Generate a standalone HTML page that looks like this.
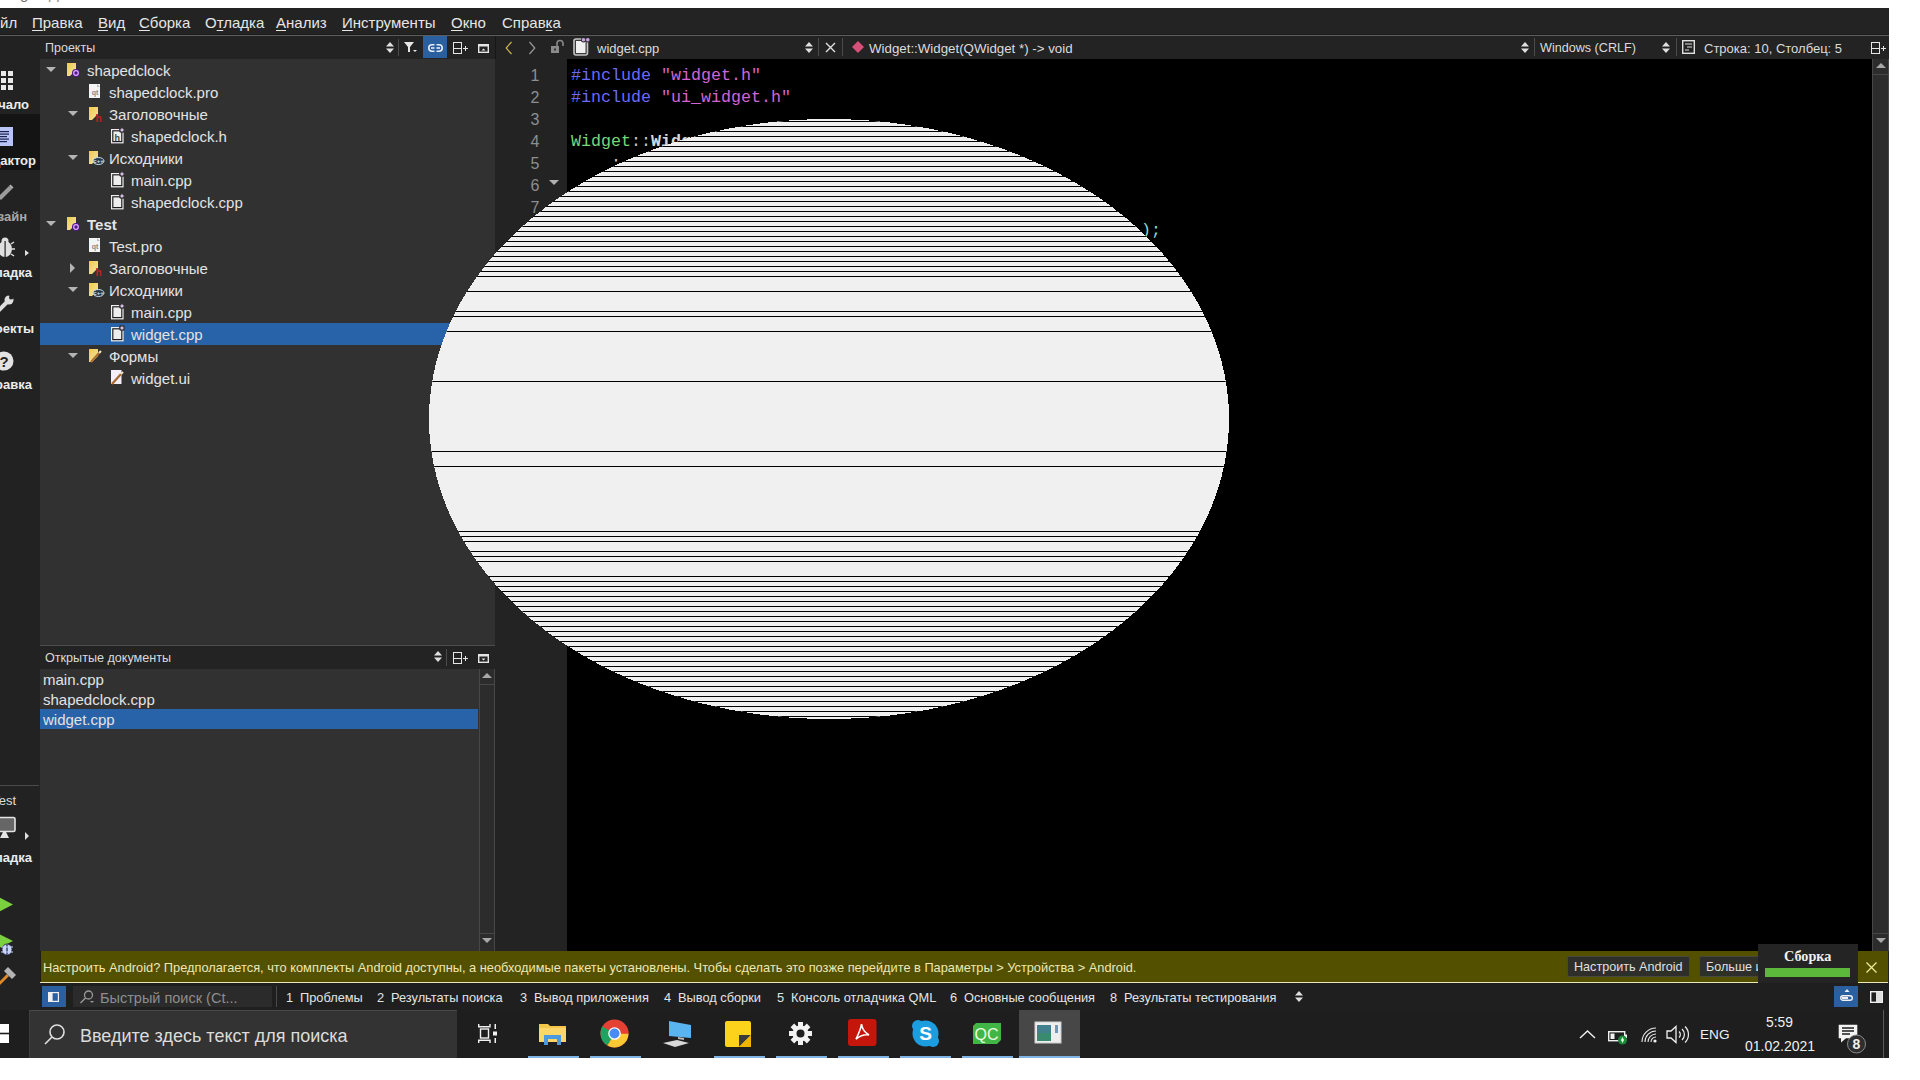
<!DOCTYPE html><html><head><meta charset="utf-8"><style>
html,body{margin:0;padding:0;width:1920px;height:1080px;overflow:hidden;background:#fff;}
body>div,body>svg{position:absolute;}
.t{position:absolute;white-space:pre;line-height:1;}
u{text-decoration:underline;text-underline-offset:2px;}
</style></head><body>
<div class="t" style="left:20px;top:-14px;font-size:15px;color:#707070;font-family:'Liberation Sans', sans-serif;">g</div>
<div class="t" style="left:48px;top:-14px;font-size:15px;color:#909090;font-family:'Liberation Sans', sans-serif;">pp</div>
<div style="left:0px;top:8px;width:1889px;height:1050px;background:#232323;"></div>
<div style="left:0px;top:8px;width:1889px;height:27px;background:#232323;"></div>
<div style="left:0px;top:34px;width:1889px;height:1px;background:#1c1c1c;"></div>
<div style="left:0px;top:35px;width:1889px;height:1px;background:#5c5c5c;"></div>
<div class="t" style="left:0px;top:15px;font-size:15px;color:#e6e6e6;font-family:'Liberation Sans', sans-serif;">йл</div>
<div class="t" style="left:32px;top:15px;font-size:15px;color:#e6e6e6;font-family:'Liberation Sans', sans-serif;"><u>П</u>равка</div>
<div class="t" style="left:98px;top:15px;font-size:15px;color:#e6e6e6;font-family:'Liberation Sans', sans-serif;"><u>В</u>ид</div>
<div class="t" style="left:139px;top:15px;font-size:15px;color:#e6e6e6;font-family:'Liberation Sans', sans-serif;"><u>С</u>борка</div>
<div class="t" style="left:205px;top:15px;font-size:15px;color:#e6e6e6;font-family:'Liberation Sans', sans-serif;">О<u>т</u>ладка</div>
<div class="t" style="left:276px;top:15px;font-size:15px;color:#e6e6e6;font-family:'Liberation Sans', sans-serif;"><u>А</u>нализ</div>
<div class="t" style="left:342px;top:15px;font-size:15px;color:#e6e6e6;font-family:'Liberation Sans', sans-serif;"><u>И</u>нструменты</div>
<div class="t" style="left:451px;top:15px;font-size:15px;color:#e6e6e6;font-family:'Liberation Sans', sans-serif;"><u>О</u>кно</div>
<div class="t" style="left:502px;top:15px;font-size:15px;color:#e6e6e6;font-family:'Liberation Sans', sans-serif;">Справ<u>к</u>а</div>
<div style="left:0px;top:36px;width:40px;height:974px;background:#222222;"></div>
<div style="left:0px;top:114px;width:40px;height:56px;background:#141414;"></div>
<svg style="position:absolute;left:0px;top:71px;overflow:visible;" width="14" height="19" viewBox="0 0 14 19"><rect x="-6" y="0" width="5" height="5" fill="#e8e8e8"/><rect x="-6" y="7" width="5" height="5" fill="#e8e8e8"/><rect x="-6" y="14" width="5" height="5" fill="#e8e8e8"/><rect x="1" y="0" width="5" height="5" fill="#e8e8e8"/><rect x="1" y="7" width="5" height="5" fill="#e8e8e8"/><rect x="1" y="14" width="5" height="5" fill="#e8e8e8"/><rect x="8" y="0" width="5" height="5" fill="#e8e8e8"/><rect x="8" y="7" width="5" height="5" fill="#e8e8e8"/><rect x="8" y="14" width="5" height="5" fill="#e8e8e8"/></svg>
<div class="t" style="right:1891px;top:98px;font-size:13px;color:#ececec;font-family:'Liberation Sans', sans-serif;text-align:right;font-weight:bold;">Начало</div>
<svg style="position:absolute;left:0px;top:127px;overflow:visible;" width="14" height="20" viewBox="0 0 14 20"><rect x="-6" y="0" width="19" height="19" fill="#b8c4f4"/><g fill="#1a2050"><rect x="-4" y="4" width="13" height="1.2"/><rect x="-4" y="6.5" width="13" height="1.2"/><rect x="-4" y="9" width="11" height="1.2"/><rect x="-4" y="11.5" width="13" height="1.2"/><rect x="-4" y="14" width="11" height="1.2"/></g></svg>
<div class="t" style="right:1884px;top:154px;font-size:13px;color:#ececec;font-family:'Liberation Sans', sans-serif;text-align:right;font-weight:bold;">Редактор</div>
<svg style="position:absolute;left:0px;top:183px;overflow:visible;" width="14" height="17" viewBox="0 0 14 17"><path d="M-2,14 L9,3 L12,6 L1,17 Z" fill="#9c9c9c"/><path d="M9,3 L10.5,1.5 L13.5,4.5 L12,6 Z" fill="#b0b0b0"/></svg>
<div class="t" style="right:1893px;top:210px;font-size:13px;color:#a8a8a8;font-family:'Liberation Sans', sans-serif;text-align:right;font-weight:bold;">Дизайн</div>
<svg style="position:absolute;left:0px;top:238px;overflow:visible;" width="30" height="20" viewBox="0 0 30 20"><ellipse cx="5" cy="11" rx="7" ry="8" fill="#dedede"/><circle cx="5" cy="3" r="3.5" fill="#dedede"/><rect x="4.5" y="3" width="1.2" height="16" fill="#222"/><path d="M11,6 L14,4 M12,11 L15,11 M11,16 L14,18" stroke="#dedede" stroke-width="1.5"/><path d="M25,12 L29,15 L25,18 Z" fill="#e0e0e0"/></svg>
<div class="t" style="right:1888px;top:266px;font-size:13px;color:#ececec;font-family:'Liberation Sans', sans-serif;text-align:right;font-weight:bold;">Отладка</div>
<svg style="position:absolute;left:0px;top:295px;overflow:visible;" width="14" height="17" viewBox="0 0 14 17"><path d="M-1,15 L6,8" stroke="#dedede" stroke-width="4" stroke-linecap="round"/><circle cx="9" cy="5" r="4.5" fill="#dedede"/><path d="M8.5,0 L13,0 L13,4.5 Z" fill="#222"/><circle cx="11" cy="2.5" r="2" fill="#222"/></svg>
<div class="t" style="right:1886px;top:322px;font-size:13px;color:#ececec;font-family:'Liberation Sans', sans-serif;text-align:right;font-weight:bold;">Проекты</div>
<svg style="position:absolute;left:0px;top:351px;overflow:visible;" width="14" height="20" viewBox="0 0 14 20"><circle cx="4" cy="10" r="9.5" fill="#e2e2e2"/><text x="4" y="15.5" font-family="Liberation Sans" font-weight="bold" font-size="15" text-anchor="middle" fill="#222">?</text></svg>
<div class="t" style="right:1888px;top:378px;font-size:13px;color:#ececec;font-family:'Liberation Sans', sans-serif;text-align:right;font-weight:bold;">Справка</div>
<div style="left:0px;top:785px;width:39px;height:1px;background:#4a4a4a;"></div>
<div class="t" style="right:1904px;top:794px;font-size:13px;color:#dcdcdc;font-family:'Liberation Sans', sans-serif;text-align:right;">Test</div>
<svg style="position:absolute;left:0px;top:817px;overflow:visible;" width="30" height="25" viewBox="0 0 30 25"><rect x="-4" y="0.5" width="19" height="14" rx="1.5" fill="#666" stroke="#e4e4e4" stroke-width="1.6"/><path d="M3,15 L6,15 L9,21 L0,21 Z" fill="#e4e4e4"/><path d="M25,832 L29,836 L25,840 Z" transform="translate(0,-817)" fill="#e0e0e0"/></svg>
<div class="t" style="right:1888px;top:851px;font-size:13px;color:#ececec;font-family:'Liberation Sans', sans-serif;text-align:right;font-weight:bold;">Отладка</div>
<svg style="position:absolute;left:0px;top:896px;overflow:visible;" width="14" height="18" viewBox="0 0 14 18"><path d="M-5,-1 L13,8.5 L-5,18 Z" fill="#7bd03f"/></svg>
<svg style="position:absolute;left:0px;top:933px;overflow:visible;" width="16" height="24" viewBox="0 0 16 24"><path d="M-5,-1 L13,8 L-5,17 Z" fill="#7bd03f"/><ellipse cx="7" cy="16.5" rx="5" ry="5.5" fill="#c8d4f8" stroke="#1a1a40" stroke-width="0.8"/><rect x="6.4" y="11.5" width="1.2" height="10" fill="#1a2050"/><path d="M1,14 L13,14 M1,19 L13,19" stroke="#c8d4f8" stroke-width="1"/></svg>
<svg style="position:absolute;left:0px;top:968px;overflow:visible;" width="16" height="20" viewBox="0 0 16 20"><path d="M-2,17 L8,7" stroke="#e08a2a" stroke-width="3"/><path d="M4,3 L8,-1 L16,7 L12,11 Z" fill="#b4b4b4"/></svg>
<div style="left:40px;top:36px;width:455px;height:23px;background:#232323;"></div>
<div class="t" style="left:45px;top:42px;font-size:12.5px;color:#dadada;font-family:'Liberation Sans', sans-serif;">Проекты</div>
<svg style="position:absolute;left:386px;top:42px;overflow:visible;" width="8" height="11" viewBox="0 0 8 11"><path d="M0,4.5 L4,0 L8,4.5 Z M0,6.5 L4,11 L8,6.5 Z" fill="#e0e0e0"/></svg>
<div style="left:398px;top:39px;width:1px;height:17px;background:#4a4a4a;"></div>
<svg style="position:absolute;left:404px;top:42px;overflow:visible;" width="14" height="11" viewBox="0 0 14 11"><path d="M0,0 L10,0 L6,5 L6,10 L4,10 L4,5 Z" fill="#e6e6e6"/><path d="M9,8 L13,8 L11,10 Z" fill="#e6e6e6"/></svg>
<div style="left:423px;top:36px;width:24px;height:22px;background:#2a5fa0;"></div>
<svg style="position:absolute;left:428px;top:44px;overflow:visible;" width="15" height="8" viewBox="0 0 15 8"><rect x="0.8" y="0.8" width="13.4" height="6.4" rx="3.2" fill="none" stroke="#e6eef8" stroke-width="1.6"/><rect x="3" y="3.2" width="9" height="1.6" fill="#e6eef8"/><rect x="6.5" y="0" width="2" height="8" fill="#2a5fa0"/></svg>
<svg style="position:absolute;left:453px;top:42px;overflow:visible;shape-rendering:crispEdges;" width="16" height="12" viewBox="0 0 16 12"><rect x="0.5" y="0.5" width="8" height="11" fill="none" stroke="#e6e6e6" stroke-width="1.1"/><rect x="1" y="5.5" width="7" height="1" fill="#e6e6e6"/><rect x="10" y="5.5" width="5" height="1" fill="#e6e6e6"/><rect x="12" y="3.5" width="1" height="5" fill="#e6e6e6"/></svg>
<svg style="position:absolute;left:478px;top:44px;overflow:visible;" width="11" height="9" viewBox="0 0 11 9"><rect x="0.7" y="0.7" width="9.6" height="7.6" fill="none" stroke="#e6e6e6" stroke-width="1.4"/><rect x="1" y="1" width="9" height="1.5" fill="#e6e6e6"/><path d="M3.5,6.5 L7.5,6.5 L5.5,4.5 Z" fill="#e6e6e6"/></svg>
<div style="left:40px;top:59px;width:455px;height:586px;background:#313131;"></div>
<div style="left:40px;top:645px;width:455px;height:1px;background:#4c4c4c;"></div>
<svg style="position:absolute;left:46px;top:67px;overflow:visible;" width="10" height="6" viewBox="0 0 10 6"><path d="M0,0 L10,0 L5,5 Z" fill="#b4b4b4"/></svg>
<svg style="position:absolute;left:67px;top:63px;overflow:visible;" width="14" height="15" viewBox="0 0 14 15"><defs><linearGradient id="fg" x1="0" y1="0" x2="1" y2="1"><stop offset="0" stop-color="#f2c94c"/><stop offset="1" stop-color="#f4e6a8"/></linearGradient></defs><path d="M0,0 L9,0 L9,7 L3,13 L0,13 Z" fill="url(#fg)"/><circle cx="9" cy="10" r="4" fill="#4a1a8a"/><circle cx="9" cy="10" r="2.3" fill="none" stroke="#e6a8ff" stroke-width="1.2"/></svg>
<div class="t" style="left:87px;top:63px;font-size:15px;color:#e3e3e3;font-family:'Liberation Sans', sans-serif;">shapedclock</div>
<svg style="position:absolute;left:89px;top:84px;overflow:visible;" width="13" height="16" viewBox="0 0 13 16"><rect x="0" y="0" width="11" height="14" fill="#f4f4f4"/><path d="M8,0 L11,3 L8,3 Z" fill="#bbb"/><text x="6" y="10.5" font-family="Liberation Sans" font-size="7" font-weight="bold" fill="#8a8a8a" text-anchor="middle">qt</text></svg>
<div class="t" style="left:109px;top:85px;font-size:15px;color:#e3e3e3;font-family:'Liberation Sans', sans-serif;">shapedclock.pro</div>
<svg style="position:absolute;left:68px;top:111px;overflow:visible;" width="10" height="6" viewBox="0 0 10 6"><path d="M0,0 L10,0 L5,5 Z" fill="#b4b4b4"/></svg>
<svg style="position:absolute;left:89px;top:107px;overflow:visible;" width="14" height="15" viewBox="0 0 14 15"><defs><linearGradient id="fg" x1="0" y1="0" x2="1" y2="1"><stop offset="0" stop-color="#f2c94c"/><stop offset="1" stop-color="#f4e6a8"/></linearGradient></defs><path d="M0,0 L9,0 L9,7 L3,13 L0,13 Z" fill="url(#fg)"/><text x="9.5" y="14.5" font-family="Liberation Sans" font-size="10" font-weight="bold" fill="#c02020" text-anchor="middle">h</text></svg>
<div class="t" style="left:109px;top:107px;font-size:15px;color:#e3e3e3;font-family:'Liberation Sans', sans-serif;">Заголовочные</div>
<svg style="position:absolute;left:111px;top:128px;overflow:visible;" width="13" height="16" viewBox="0 0 13 16"><rect x="0.6" y="1.6" width="11.4" height="13.2" fill="#1e1e1e" stroke="#f0f0f0" stroke-width="1.2"/><rect x="2.4" y="3.4" width="7.8" height="9.6" fill="#eeeeee"/><circle cx="11" cy="2" r="3" fill="#313131"/><path d="M11,-0.5 L11.8,1.2 L13.5,2 L11.8,2.8 L11,4.5 L10.2,2.8 L8.5,2 L10.2,1.2 Z" fill="#e0c8f0"/><text x="6.2" y="12.5" font-family="Liberation Sans" font-size="9" font-weight="bold" fill="#444" text-anchor="middle">h</text></svg>
<div class="t" style="left:131px;top:129px;font-size:15px;color:#e3e3e3;font-family:'Liberation Sans', sans-serif;">shapedclock.h</div>
<svg style="position:absolute;left:68px;top:155px;overflow:visible;" width="10" height="6" viewBox="0 0 10 6"><path d="M0,0 L10,0 L5,5 Z" fill="#b4b4b4"/></svg>
<svg style="position:absolute;left:89px;top:151px;overflow:visible;" width="14" height="15" viewBox="0 0 14 15"><defs><linearGradient id="fg" x1="0" y1="0" x2="1" y2="1"><stop offset="0" stop-color="#f2c94c"/><stop offset="1" stop-color="#f4e6a8"/></linearGradient></defs><path d="M0,0 L9,0 L9,7 L3,13 L0,13 Z" fill="url(#fg)"/><ellipse cx="9.5" cy="10" rx="5.5" ry="3.5" fill="#2a3a4a" stroke="#c8e0f0" stroke-width="1"/><text x="9.5" y="12.3" font-family="Liberation Sans" font-size="6" font-weight="bold" fill="#c8e0f0" text-anchor="middle">c++</text></svg>
<div class="t" style="left:109px;top:151px;font-size:15px;color:#e3e3e3;font-family:'Liberation Sans', sans-serif;">Исходники</div>
<svg style="position:absolute;left:111px;top:172px;overflow:visible;" width="13" height="16" viewBox="0 0 13 16"><rect x="0.6" y="1.6" width="11.4" height="13.2" fill="#1e1e1e" stroke="#f0f0f0" stroke-width="1.2"/><rect x="2.4" y="3.4" width="7.8" height="9.6" fill="#eeeeee"/><circle cx="11" cy="2" r="3" fill="#313131"/><path d="M11,-0.5 L11.8,1.2 L13.5,2 L11.8,2.8 L11,4.5 L10.2,2.8 L8.5,2 L10.2,1.2 Z" fill="#e0c8f0"/></svg>
<div class="t" style="left:131px;top:173px;font-size:15px;color:#e3e3e3;font-family:'Liberation Sans', sans-serif;">main.cpp</div>
<svg style="position:absolute;left:111px;top:194px;overflow:visible;" width="13" height="16" viewBox="0 0 13 16"><rect x="0.6" y="1.6" width="11.4" height="13.2" fill="#1e1e1e" stroke="#f0f0f0" stroke-width="1.2"/><rect x="2.4" y="3.4" width="7.8" height="9.6" fill="#eeeeee"/><circle cx="11" cy="2" r="3" fill="#313131"/><path d="M11,-0.5 L11.8,1.2 L13.5,2 L11.8,2.8 L11,4.5 L10.2,2.8 L8.5,2 L10.2,1.2 Z" fill="#e0c8f0"/></svg>
<div class="t" style="left:131px;top:195px;font-size:15px;color:#e3e3e3;font-family:'Liberation Sans', sans-serif;">shapedclock.cpp</div>
<svg style="position:absolute;left:46px;top:221px;overflow:visible;" width="10" height="6" viewBox="0 0 10 6"><path d="M0,0 L10,0 L5,5 Z" fill="#b4b4b4"/></svg>
<svg style="position:absolute;left:67px;top:217px;overflow:visible;" width="14" height="15" viewBox="0 0 14 15"><defs><linearGradient id="fg" x1="0" y1="0" x2="1" y2="1"><stop offset="0" stop-color="#f2c94c"/><stop offset="1" stop-color="#f4e6a8"/></linearGradient></defs><path d="M0,0 L9,0 L9,7 L3,13 L0,13 Z" fill="url(#fg)"/><circle cx="9" cy="10" r="4" fill="#4a1a8a"/><circle cx="9" cy="10" r="2.3" fill="none" stroke="#e6a8ff" stroke-width="1.2"/></svg>
<div class="t" style="left:87px;top:217px;font-size:15px;color:#e3e3e3;font-family:'Liberation Sans', sans-serif;font-weight:bold;">Test</div>
<svg style="position:absolute;left:89px;top:238px;overflow:visible;" width="13" height="16" viewBox="0 0 13 16"><rect x="0" y="0" width="11" height="14" fill="#f4f4f4"/><path d="M8,0 L11,3 L8,3 Z" fill="#bbb"/><text x="6" y="10.5" font-family="Liberation Sans" font-size="7" font-weight="bold" fill="#8a8a8a" text-anchor="middle">qt</text></svg>
<div class="t" style="left:109px;top:239px;font-size:15px;color:#e3e3e3;font-family:'Liberation Sans', sans-serif;">Test.pro</div>
<svg style="position:absolute;left:70px;top:263px;overflow:visible;" width="6" height="10" viewBox="0 0 6 10"><path d="M0,0 L5,5 L0,10 Z" fill="#b4b4b4"/></svg>
<svg style="position:absolute;left:89px;top:261px;overflow:visible;" width="14" height="15" viewBox="0 0 14 15"><defs><linearGradient id="fg" x1="0" y1="0" x2="1" y2="1"><stop offset="0" stop-color="#f2c94c"/><stop offset="1" stop-color="#f4e6a8"/></linearGradient></defs><path d="M0,0 L9,0 L9,7 L3,13 L0,13 Z" fill="url(#fg)"/><text x="9.5" y="14.5" font-family="Liberation Sans" font-size="10" font-weight="bold" fill="#c02020" text-anchor="middle">h</text></svg>
<div class="t" style="left:109px;top:261px;font-size:15px;color:#e3e3e3;font-family:'Liberation Sans', sans-serif;">Заголовочные</div>
<svg style="position:absolute;left:68px;top:287px;overflow:visible;" width="10" height="6" viewBox="0 0 10 6"><path d="M0,0 L10,0 L5,5 Z" fill="#b4b4b4"/></svg>
<svg style="position:absolute;left:89px;top:283px;overflow:visible;" width="14" height="15" viewBox="0 0 14 15"><defs><linearGradient id="fg" x1="0" y1="0" x2="1" y2="1"><stop offset="0" stop-color="#f2c94c"/><stop offset="1" stop-color="#f4e6a8"/></linearGradient></defs><path d="M0,0 L9,0 L9,7 L3,13 L0,13 Z" fill="url(#fg)"/><ellipse cx="9.5" cy="10" rx="5.5" ry="3.5" fill="#2a3a4a" stroke="#c8e0f0" stroke-width="1"/><text x="9.5" y="12.3" font-family="Liberation Sans" font-size="6" font-weight="bold" fill="#c8e0f0" text-anchor="middle">c++</text></svg>
<div class="t" style="left:109px;top:283px;font-size:15px;color:#e3e3e3;font-family:'Liberation Sans', sans-serif;">Исходники</div>
<svg style="position:absolute;left:111px;top:304px;overflow:visible;" width="13" height="16" viewBox="0 0 13 16"><rect x="0.6" y="1.6" width="11.4" height="13.2" fill="#1e1e1e" stroke="#f0f0f0" stroke-width="1.2"/><rect x="2.4" y="3.4" width="7.8" height="9.6" fill="#eeeeee"/><circle cx="11" cy="2" r="3" fill="#313131"/><path d="M11,-0.5 L11.8,1.2 L13.5,2 L11.8,2.8 L11,4.5 L10.2,2.8 L8.5,2 L10.2,1.2 Z" fill="#e0c8f0"/></svg>
<div class="t" style="left:131px;top:305px;font-size:15px;color:#e3e3e3;font-family:'Liberation Sans', sans-serif;">main.cpp</div>
<div style="left:40px;top:323px;width:455px;height:22px;background:#2862a8;"></div>
<svg style="position:absolute;left:111px;top:326px;overflow:visible;" width="13" height="16" viewBox="0 0 13 16"><rect x="0.6" y="1.6" width="11.4" height="13.2" fill="#1e1e1e" stroke="#f0f0f0" stroke-width="1.2"/><rect x="2.4" y="3.4" width="7.8" height="9.6" fill="#eeeeee"/><circle cx="11" cy="2" r="3" fill="#313131"/><path d="M11,-0.5 L11.8,1.2 L13.5,2 L11.8,2.8 L11,4.5 L10.2,2.8 L8.5,2 L10.2,1.2 Z" fill="#e0c8f0"/></svg>
<div class="t" style="left:131px;top:327px;font-size:15px;color:#e3e3e3;font-family:'Liberation Sans', sans-serif;">widget.cpp</div>
<svg style="position:absolute;left:68px;top:353px;overflow:visible;" width="10" height="6" viewBox="0 0 10 6"><path d="M0,0 L10,0 L5,5 Z" fill="#b4b4b4"/></svg>
<svg style="position:absolute;left:89px;top:349px;overflow:visible;" width="14" height="15" viewBox="0 0 14 15"><defs><linearGradient id="fg" x1="0" y1="0" x2="1" y2="1"><stop offset="0" stop-color="#f2c94c"/><stop offset="1" stop-color="#f4e6a8"/></linearGradient></defs><path d="M0,0 L9,0 L9,7 L3,13 L0,13 Z" fill="url(#fg)"/><path d="M2,13 L10,4" stroke="#b07030" stroke-width="2.2"/><path d="M10,4 L12,2" stroke="#f0e0c0" stroke-width="2.2"/></svg>
<div class="t" style="left:109px;top:349px;font-size:15px;color:#e3e3e3;font-family:'Liberation Sans', sans-serif;">Формы</div>
<svg style="position:absolute;left:111px;top:370px;overflow:visible;" width="13" height="16" viewBox="0 0 13 16"><rect x="0" y="0" width="10.5" height="14" fill="#f4eef8"/><path d="M1,14 L10,4" stroke="#a86830" stroke-width="2.2"/><path d="M10,4 L12,2" stroke="#f0e0c0" stroke-width="2.2"/></svg>
<div class="t" style="left:131px;top:371px;font-size:15px;color:#e3e3e3;font-family:'Liberation Sans', sans-serif;">widget.ui</div>
<div style="left:40px;top:646px;width:455px;height:23px;background:#232323;"></div>
<div class="t" style="left:45px;top:652px;font-size:12.6px;color:#dadada;font-family:'Liberation Sans', sans-serif;">Открытые документы</div>
<svg style="position:absolute;left:434px;top:651px;overflow:visible;" width="8" height="11" viewBox="0 0 8 11"><path d="M0,4.5 L4,0 L8,4.5 Z M0,6.5 L4,11 L8,6.5 Z" fill="#e0e0e0"/></svg>
<div style="left:446px;top:649px;width:1px;height:17px;background:#4a4a4a;"></div>
<svg style="position:absolute;left:453px;top:652px;overflow:visible;shape-rendering:crispEdges;" width="16" height="12" viewBox="0 0 16 12"><rect x="0.5" y="0.5" width="8" height="11" fill="none" stroke="#e6e6e6" stroke-width="1.1"/><rect x="1" y="5.5" width="7" height="1" fill="#e6e6e6"/><rect x="10" y="5.5" width="5" height="1" fill="#e6e6e6"/><rect x="12" y="3.5" width="1" height="5" fill="#e6e6e6"/></svg>
<svg style="position:absolute;left:478px;top:654px;overflow:visible;" width="11" height="9" viewBox="0 0 11 9"><rect x="0.7" y="0.7" width="9.6" height="7.6" fill="none" stroke="#e6e6e6" stroke-width="1.4"/><rect x="1" y="1" width="9" height="1.5" fill="#e6e6e6"/><path d="M3.5,4.5 L7.5,4.5 L5.5,6.5 Z" fill="#e6e6e6"/></svg>
<div style="left:40px;top:669px;width:439px;height:282px;background:#313131;"></div>
<div style="left:479px;top:669px;width:16px;height:282px;background:#2c2c2c;box-sizing:border-box;border-left:1px solid #474747;border-right:1px solid #474747;"></div>
<div style="left:479px;top:684px;width:16px;height:1px;background:#474747;"></div>
<div style="left:479px;top:933px;width:16px;height:1px;background:#474747;"></div>
<svg style="position:absolute;left:482px;top:673px;overflow:visible;" width="10" height="6" viewBox="0 0 10 6"><path d="M0,5 L5,0 L10,5 Z" fill="#a8a8a8"/></svg>
<svg style="position:absolute;left:482px;top:938px;overflow:visible;" width="10" height="6" viewBox="0 0 10 6"><path d="M0,0 L5,5 L10,0 Z" fill="#a8a8a8"/></svg>
<div class="t" style="left:43px;top:672px;font-size:15px;color:#e3e3e3;font-family:'Liberation Sans', sans-serif;">main.cpp</div>
<div class="t" style="left:43px;top:692px;font-size:15px;color:#e3e3e3;font-family:'Liberation Sans', sans-serif;">shapedclock.cpp</div>
<div style="left:40px;top:709px;width:438px;height:20px;background:#2862a8;"></div>
<div class="t" style="left:43px;top:712px;font-size:15px;color:#e3e3e3;font-family:'Liberation Sans', sans-serif;">widget.cpp</div>
<div style="left:495px;top:36px;width:1394px;height:23px;background:#232323;"></div>
<div style="left:495px;top:36px;width:1px;height:23px;background:#171717;"></div>
<svg style="position:absolute;left:505px;top:41px;overflow:visible;" width="8" height="14" viewBox="0 0 8 14"><path d="M6.5,1 L1.2,7 L6.5,13" fill="none" stroke="#cdb550" stroke-width="1.2"/></svg>
<svg style="position:absolute;left:528px;top:41px;overflow:visible;" width="8" height="14" viewBox="0 0 8 14"><path d="M1.5,1 L6.8,7 L1.5,13" fill="none" stroke="#9a9a9a" stroke-width="1.2"/></svg>
<svg style="position:absolute;left:551px;top:40px;overflow:visible;" width="13" height="14" viewBox="0 0 13 14"><rect x="0" y="6" width="8" height="7" fill="#8a8a8a"/><rect x="3" y="8.5" width="2" height="2" fill="#333"/><path d="M6,6 L6,3.5 A3,3 0 0 1 12,3.5 L12,6" fill="none" stroke="#8a8a8a" stroke-width="1.6"/></svg>
<svg style="position:absolute;left:573px;top:37px;overflow:visible;" width="17" height="19" viewBox="0 0 17 19"><rect x="1" y="2" width="13.5" height="16" rx="2" fill="#3a3a3a" stroke="#c4c4c4" stroke-width="1.6"/><rect x="3" y="4" width="9.5" height="12" fill="#f0f0f0"/><circle cx="10.5" cy="2.8" r="2.6" fill="#2a2a2a"/><circle cx="14.8" cy="2.8" r="2.6" fill="#2a2a2a"/><circle cx="10.5" cy="2.8" r="1.8" fill="#c8a4e4"/><circle cx="14.8" cy="2.8" r="1.8" fill="#c8a4e4"/></svg>
<div class="t" style="left:597px;top:42px;font-size:13px;color:#dcdcdc;font-family:'Liberation Sans', sans-serif;">widget.cpp</div>
<svg style="position:absolute;left:805px;top:42px;overflow:visible;" width="8" height="11" viewBox="0 0 8 11"><path d="M0,4.5 L4,0 L8,4.5 Z M0,6.5 L4,11 L8,6.5 Z" fill="#e0e0e0"/></svg>
<div style="left:818px;top:38px;width:1px;height:18px;background:#4a4a4a;"></div>
<svg style="position:absolute;left:825px;top:42px;overflow:visible;" width="11" height="11" viewBox="0 0 11 11"><path d="M1,1 L10,10 M10,1 L1,10" stroke="#e0e0e0" stroke-width="1.4"/></svg>
<div style="left:842px;top:38px;width:1px;height:18px;background:#4a4a4a;"></div>
<svg style="position:absolute;left:852px;top:41px;overflow:visible;" width="12" height="12" viewBox="0 0 12 12"><path d="M6,0 L12,6 L6,12 L0,6 Z" fill="#d6507a"/></svg>
<div class="t" style="left:869px;top:42px;font-size:13.3px;color:#dcdcdc;font-family:'Liberation Sans', sans-serif;">Widget::Widget(QWidget *) -&gt; void</div>
<svg style="position:absolute;left:1521px;top:42px;overflow:visible;" width="8" height="11" viewBox="0 0 8 11"><path d="M0,4.5 L4,0 L8,4.5 Z M0,6.5 L4,11 L8,6.5 Z" fill="#e0e0e0"/></svg>
<div style="left:1534px;top:38px;width:1px;height:18px;background:#4a4a4a;"></div>
<div class="t" style="left:1540px;top:42px;font-size:12.6px;color:#dcdcdc;font-family:'Liberation Sans', sans-serif;">Windows (CRLF)</div>
<svg style="position:absolute;left:1662px;top:42px;overflow:visible;" width="8" height="11" viewBox="0 0 8 11"><path d="M0,4.5 L4,0 L8,4.5 Z M0,6.5 L4,11 L8,6.5 Z" fill="#e0e0e0"/></svg>
<div style="left:1676px;top:38px;width:1px;height:18px;background:#4a4a4a;"></div>
<svg style="position:absolute;left:1682px;top:40px;overflow:visible;" width="13" height="14" viewBox="0 0 13 14"><rect x="0.7" y="0.7" width="11.6" height="12.6" fill="none" stroke="#e0e0e0" stroke-width="1.4"/><path d="M3,4 L10,4 M5,7 L10,7 M3,10 L7,10" stroke="#e0e0e0" stroke-width="1.2"/></svg>
<div class="t" style="left:1704px;top:42px;font-size:13px;color:#dcdcdc;font-family:'Liberation Sans', sans-serif;">Строка: 10, Столбец: 5</div>
<svg style="position:absolute;left:1871px;top:42px;overflow:visible;shape-rendering:crispEdges;" width="16" height="12" viewBox="0 0 16 12"><rect x="0.5" y="0.5" width="8" height="11" fill="none" stroke="#e6e6e6" stroke-width="1.1"/><rect x="1" y="5.5" width="7" height="1" fill="#e6e6e6"/><rect x="10" y="5.5" width="5" height="1" fill="#e6e6e6"/><rect x="12" y="3.5" width="1" height="5" fill="#e6e6e6"/></svg>
<div style="left:495px;top:59px;width:72px;height:892px;background:#232323;"></div>
<div style="left:567px;top:59px;width:1305px;height:892px;background:#000000;"></div>
<div style="left:1872px;top:59px;width:17px;height:892px;background:#2c2c2c;box-sizing:border-box;border-left:1px solid #474747;border-right:1px solid #474747;"></div>
<div style="left:1872px;top:74px;width:17px;height:1px;background:#474747;"></div>
<div style="left:1872px;top:933px;width:17px;height:1px;background:#474747;"></div>
<svg style="position:absolute;left:1876px;top:63px;overflow:visible;" width="10" height="6" viewBox="0 0 10 6"><path d="M0,5 L5,0 L10,5 Z" fill="#a8a8a8"/></svg>
<svg style="position:absolute;left:1876px;top:938px;overflow:visible;" width="10" height="6" viewBox="0 0 10 6"><path d="M0,0 L5,5 L10,0 Z" fill="#a8a8a8"/></svg>
<div class="t" style="left:530.5px;top:68px;font-size:16px;color:#8e8e8e;font-family:'Liberation Sans', sans-serif;">1</div>
<div class="t" style="left:530.5px;top:90px;font-size:16px;color:#8e8e8e;font-family:'Liberation Sans', sans-serif;">2</div>
<div class="t" style="left:530.5px;top:112px;font-size:16px;color:#8e8e8e;font-family:'Liberation Sans', sans-serif;">3</div>
<div class="t" style="left:530.5px;top:134px;font-size:16px;color:#8e8e8e;font-family:'Liberation Sans', sans-serif;">4</div>
<div class="t" style="left:530.5px;top:156px;font-size:16px;color:#8e8e8e;font-family:'Liberation Sans', sans-serif;">5</div>
<div class="t" style="left:530.5px;top:178px;font-size:16px;color:#8e8e8e;font-family:'Liberation Sans', sans-serif;">6</div>
<div class="t" style="left:530.5px;top:200px;font-size:16px;color:#8e8e8e;font-family:'Liberation Sans', sans-serif;">7</div>
<svg style="position:absolute;left:549px;top:180px;overflow:visible;" width="10" height="6" viewBox="0 0 10 6"><path d="M0,0 L10,0 L5,5 Z" fill="#b0b0b0"/></svg>
<div class="t" style="left:571px;top:68px;font-size:16.67px;color:#d0d0d0;font-family:'Liberation Mono', monospace;"><span style="color:#6a6af8">#include</span> <span style="color:#d264d2">"widget.h"</span></div>
<div class="t" style="left:571px;top:90px;font-size:16.67px;color:#d0d0d0;font-family:'Liberation Mono', monospace;"><span style="color:#6a6af8">#include</span> <span style="color:#d264d2">"ui_widget.h"</span></div>
<div class="t" style="left:571px;top:112px;font-size:16.67px;color:#d0d0d0;font-family:'Liberation Mono', monospace;"></div>
<div class="t" style="left:571px;top:134px;font-size:16.67px;color:#d0d0d0;font-family:'Liberation Mono', monospace;"><span style="color:#7ad67a">Widget</span><span style="color:#c8c8c8">::</span><span style="color:#d8d8d8;font-weight:bold">Widget</span></div>
<div class="t" style="left:571px;top:156px;font-size:16.67px;color:#d0d0d0;font-family:'Liberation Mono', monospace;">    <span style="color:#c8c8c8">:</span></div>
<div class="t" style="left:1141px;top:223px;font-size:16.67px;color:#80d8d0;font-family:'Liberation Mono', monospace;"><span style="color:#80d8d0">);</span></div>
<svg style="position:absolute;left:429px;top:119px;overflow:visible;shape-rendering:crispEdges;" width="800" height="600" viewBox="0 0 800 600"><defs><clipPath id="ec"><ellipse cx="400" cy="300" rx="400" ry="300"/></clipPath></defs><ellipse cx="400" cy="300" rx="400" ry="300" fill="#f0f0f0"/><g clip-path="url(#ec)" fill="#000"><rect x="0" y="2" width="800" height="1"/><rect x="0" y="7" width="800" height="1"/><rect x="0" y="12" width="800" height="1"/><rect x="0" y="17" width="800" height="1"/><rect x="0" y="22" width="800" height="1"/><rect x="0" y="27" width="800" height="1"/><rect x="0" y="32" width="800" height="1"/><rect x="0" y="37" width="800" height="1"/><rect x="0" y="42" width="800" height="1"/><rect x="0" y="47" width="800" height="1"/><rect x="0" y="52" width="800" height="1"/><rect x="0" y="57" width="800" height="1"/><rect x="0" y="62" width="800" height="1"/><rect x="0" y="67" width="800" height="1"/><rect x="0" y="72" width="800" height="1"/><rect x="0" y="77" width="800" height="1"/><rect x="0" y="82" width="800" height="1"/><rect x="0" y="87" width="800" height="1"/><rect x="0" y="92" width="800" height="1"/><rect x="0" y="97" width="800" height="1"/><rect x="0" y="102" width="800" height="1"/><rect x="0" y="107" width="800" height="1"/><rect x="0" y="112" width="800" height="1"/><rect x="0" y="117" width="800" height="1"/><rect x="0" y="122" width="800" height="1"/><rect x="0" y="127" width="800" height="1"/><rect x="0" y="132" width="800" height="1"/><rect x="0" y="137" width="800" height="1"/><rect x="0" y="142" width="800" height="1"/><rect x="0" y="147" width="800" height="1"/><rect x="0" y="152" width="800" height="1"/><rect x="0" y="157" width="800" height="1"/><rect x="0" y="172" width="800" height="1"/><rect x="0" y="192" width="800" height="1"/><rect x="0" y="197" width="800" height="1"/><rect x="0" y="212" width="800" height="1"/><rect x="0" y="262" width="800" height="1"/><rect x="0" y="332" width="800" height="1"/><rect x="0" y="347" width="800" height="1"/><rect x="0" y="412" width="800" height="1"/><rect x="0" y="417" width="800" height="1"/><rect x="0" y="422" width="800" height="1"/><rect x="0" y="432" width="800" height="1"/><rect x="0" y="437" width="800" height="1"/><rect x="0" y="442" width="800" height="1"/><rect x="0" y="457" width="800" height="1"/><rect x="0" y="462" width="800" height="1"/><rect x="0" y="467" width="800" height="1"/><rect x="0" y="472" width="800" height="1"/><rect x="0" y="477" width="800" height="1"/><rect x="0" y="482" width="800" height="1"/><rect x="0" y="487" width="800" height="1"/><rect x="0" y="492" width="800" height="1"/><rect x="0" y="497" width="800" height="1"/><rect x="0" y="502" width="800" height="1"/><rect x="0" y="507" width="800" height="1"/><rect x="0" y="512" width="800" height="1"/><rect x="0" y="517" width="800" height="1"/><rect x="0" y="522" width="800" height="1"/><rect x="0" y="527" width="800" height="1"/><rect x="0" y="532" width="800" height="1"/><rect x="0" y="537" width="800" height="1"/><rect x="0" y="542" width="800" height="1"/><rect x="0" y="547" width="800" height="1"/><rect x="0" y="552" width="800" height="1"/><rect x="0" y="557" width="800" height="1"/><rect x="0" y="562" width="800" height="1"/><rect x="0" y="567" width="800" height="1"/><rect x="0" y="572" width="800" height="1"/><rect x="0" y="577" width="800" height="1"/><rect x="0" y="582" width="800" height="1"/><rect x="0" y="587" width="800" height="1"/><rect x="0" y="592" width="800" height="1"/><rect x="0" y="597" width="800" height="1"/></g></svg>
<div style="left:40px;top:951px;width:1848px;height:31px;background:#535000;"></div>
<div style="left:40px;top:951px;width:1px;height:31px;background:#1e1e10;"></div>
<div style="left:40px;top:982px;width:1848px;height:1px;background:#ebe8b8;"></div>
<div class="t" style="left:43px;top:962px;font-size:12.8px;color:#ece8b8;font-family:'Liberation Sans', sans-serif;">Настроить Android? Предполагается, что комплекты Android доступны, а необходимые пакеты установлены. Чтобы сделать это позже перейдите в Параметры &gt; Устройства &gt; Android.</div>
<div style="left:1567px;top:956px;width:123px;height:21px;background:#2e2e2a;box-sizing:border-box;border:1px solid #46463a;border-radius:2px;"></div>
<div class="t" style="left:1574px;top:961px;font-size:12.6px;color:#e0e0e0;font-family:'Liberation Sans', sans-serif;">Настроить Android</div>
<div style="left:1699px;top:956px;width:70px;height:21px;background:#2e2e2a;box-sizing:border-box;border:1px solid #46463a;border-radius:2px;"></div>
<div class="t" style="left:1706px;top:961px;font-size:12.6px;color:#e0e0e0;font-family:'Liberation Sans', sans-serif;">Больше инф</div>
<svg style="position:absolute;left:1866px;top:962px;overflow:visible;" width="11" height="11" viewBox="0 0 11 11"><path d="M0.5,0.5 L10.5,10.5 M10.5,0.5 L0.5,10.5" stroke="#f0e89a" stroke-width="1.3"/></svg>
<div style="left:1758px;top:944px;width:100px;height:39px;background:#242424;"></div>
<div class="t" style="left:1784px;top:949px;font-size:14.2px;color:#f0f0f0;font-family:'Liberation Serif', serif;font-weight:bold;">Сборка</div>
<div style="left:1765px;top:968px;width:85px;height:9px;background:#5cb83a;"></div>
<div style="left:40px;top:983px;width:1849px;height:27px;background:#1f1f1f;"></div>
<div style="left:42px;top:986px;width:24px;height:21px;background:#2a5fa0;"></div>
<svg style="position:absolute;left:48px;top:992px;overflow:visible;" width="11" height="10" viewBox="0 0 11 10"><rect x="0.6" y="0.6" width="9.8" height="8.8" fill="#2a5fa0" stroke="#f0f0f0" stroke-width="1.2"/><rect x="0.6" y="0.6" width="4" height="8.8" fill="#f0f0f0"/></svg>
<div style="left:73px;top:986px;width:199px;height:21px;background:#2b2b2b;"></div>
<svg style="position:absolute;left:80px;top:990px;overflow:visible;" width="14" height="14" viewBox="0 0 14 14"><circle cx="8.5" cy="5" r="4" fill="none" stroke="#9a9a9a" stroke-width="1.3"/><path d="M5.5,8 L0.5,13" stroke="#9a9a9a" stroke-width="1.5"/><path d="M10,11 L14,11 L12,13 Z" fill="#9a9a9a"/></svg>
<div class="t" style="left:100px;top:990.5px;font-size:14.5px;color:#8e8e8e;font-family:'Liberation Sans', sans-serif;">Быстрый поиск (Ct...</div>
<div style="left:276px;top:986px;width:1px;height:21px;background:#4a4a4a;"></div>
<div class="t" style="left:286px;top:992px;font-size:12.8px;color:#e4e4e4;font-family:'Liberation Sans', sans-serif;">1</div>
<div class="t" style="left:300px;top:992px;font-size:12.8px;color:#e4e4e4;font-family:'Liberation Sans', sans-serif;">Проблемы</div>
<div class="t" style="left:377px;top:992px;font-size:12.8px;color:#e4e4e4;font-family:'Liberation Sans', sans-serif;">2</div>
<div class="t" style="left:391px;top:992px;font-size:12.8px;color:#e4e4e4;font-family:'Liberation Sans', sans-serif;">Результаты поиска</div>
<div class="t" style="left:520px;top:992px;font-size:12.8px;color:#e4e4e4;font-family:'Liberation Sans', sans-serif;">3</div>
<div class="t" style="left:534px;top:992px;font-size:12.8px;color:#e4e4e4;font-family:'Liberation Sans', sans-serif;">Вывод приложения</div>
<div class="t" style="left:664px;top:992px;font-size:12.8px;color:#e4e4e4;font-family:'Liberation Sans', sans-serif;">4</div>
<div class="t" style="left:678px;top:992px;font-size:12.8px;color:#e4e4e4;font-family:'Liberation Sans', sans-serif;">Вывод сборки</div>
<div class="t" style="left:777px;top:992px;font-size:12.8px;color:#e4e4e4;font-family:'Liberation Sans', sans-serif;">5</div>
<div class="t" style="left:791px;top:992px;font-size:12.8px;color:#e4e4e4;font-family:'Liberation Sans', sans-serif;">Консоль отладчика QML</div>
<div class="t" style="left:950px;top:992px;font-size:12.8px;color:#e4e4e4;font-family:'Liberation Sans', sans-serif;">6</div>
<div class="t" style="left:964px;top:992px;font-size:12.8px;color:#e4e4e4;font-family:'Liberation Sans', sans-serif;">Основные сообщения</div>
<div class="t" style="left:1110px;top:992px;font-size:12.8px;color:#e4e4e4;font-family:'Liberation Sans', sans-serif;">8</div>
<div class="t" style="left:1124px;top:992px;font-size:12.8px;color:#e4e4e4;font-family:'Liberation Sans', sans-serif;">Результаты тестирования</div>
<svg style="position:absolute;left:1295px;top:991px;overflow:visible;" width="8" height="11" viewBox="0 0 8 11"><path d="M0,4.5 L4,0 L8,4.5 Z M0,6.5 L4,11 L8,6.5 Z" fill="#e0e0e0"/></svg>
<div style="left:1834px;top:986px;width:24px;height:21px;background:#2a5fa0;"></div>
<svg style="position:absolute;left:1840px;top:988px;overflow:visible;" width="13" height="16" viewBox="0 0 13 16"><path d="M7,1 L9.5,4 L4.5,4 Z" fill="#f0f0f0"/><rect x="0.7" y="7.7" width="11.6" height="4.6" rx="2.3" fill="none" stroke="#f0f0f0" stroke-width="1.4"/><rect x="2" y="9" width="6" height="2" fill="#f0f0f0"/></svg>
<svg style="position:absolute;left:1870px;top:991px;overflow:visible;" width="13" height="12" viewBox="0 0 13 12"><rect x="0.7" y="0.7" width="11.6" height="10.6" fill="none" stroke="#f0f0f0" stroke-width="1.4"/><rect x="6" y="1" width="6" height="10" fill="#e0e0e0"/></svg>
<div style="left:0px;top:1010px;width:1889px;height:48px;background:#1e1e1e;"></div>
<svg style="position:absolute;left:0px;top:1024px;overflow:visible;" width="10" height="20" viewBox="0 0 10 20"><rect x="-8" y="0.5" width="8" height="8.5" fill="#fff"/><rect x="0" y="0" width="9" height="8.7" fill="#fff"/><rect x="0" y="10.3" width="9" height="8.7" fill="#fff"/></svg>
<div style="left:29px;top:1010px;width:428px;height:48px;background:#333333;box-sizing:border-box;border-top:1px solid #4a4a4a;border-left:1px solid #3e3e3e;"></div>
<svg style="position:absolute;left:44px;top:1024px;overflow:visible;" width="21" height="21" viewBox="0 0 21 21"><circle cx="13" cy="8" r="7" fill="none" stroke="#e0e0e0" stroke-width="1.6"/><path d="M8,13 L1,20" stroke="#e0e0e0" stroke-width="1.6"/></svg>
<div class="t" style="left:80px;top:1026.5px;font-size:18px;color:#dcdcdc;font-family:'Liberation Sans', sans-serif;">Введите здесь текст для поиска</div>
<svg style="position:absolute;left:478px;top:1024px;overflow:visible;" width="21" height="20" viewBox="0 0 21 20"><path d="M0.7,0 L0.7,2.7 L12,2.7 L12,0 M0.7,19 L0.7,16.3 L12,16.3 L12,19" fill="none" stroke="#f0f0f0" stroke-width="1.4"/><rect x="2.5" y="5" width="8" height="9" fill="none" stroke="#f0f0f0" stroke-width="1.4"/><rect x="16.5" y="0" width="1.5" height="5" fill="#f0f0f0"/><rect x="15" y="7.5" width="4" height="4" fill="#f0f0f0"/><rect x="16.5" y="14" width="1.5" height="5" fill="#f0f0f0"/></svg>
<svg style="position:absolute;left:539px;top:1022px;overflow:visible;" width="28" height="24" viewBox="0 0 28 24"><path d="M0,2 L9,2 L11,4 L27,4 L27,20 L0,20 Z" fill="#f4c64a"/><rect x="0" y="6" width="27" height="14" fill="#fbd769"/><path d="M5,23 L5,13 L22,13 L22,23 L18,23 L18,17 L9,17 L9,23 Z" fill="#4a9ae0"/></svg>
<svg style="position:absolute;left:600px;top:1019px;overflow:visible;" width="29" height="29" viewBox="0 0 29 29"><circle cx="14.5" cy="14.5" r="14" fill="#e34133"/><path d="M14.5,14.5 L2.4,7.5 A14,14 0 0 0 7.5,26.6 Z" fill="#1ea362"/><path d="M14.5,14.5 L7.5,26.6 A14,14 0 0 0 28.5,14.5 L14.5,14.5 Z" fill="#fcc934"/><path d="M14.5,14.5 L28.5,14.5 A14,14 0 0 0 26.6,7.5 Z" fill="#e34133"/><circle cx="14.5" cy="14.5" r="6.3" fill="#fff"/><circle cx="14.5" cy="14.5" r="5" fill="#4a8af4"/></svg>
<svg style="position:absolute;left:663px;top:1021px;overflow:visible;" width="30" height="27" viewBox="0 0 30 27"><path d="M6,0 L28,4 L28,17 L6,15 Z" fill="#5ab4f0"/><path d="M15,16 L21,17 L21,19 L15,18 Z" fill="#b8b8b8"/><path d="M0,22 L14,19 L26,22 L12,26 Z" fill="#d8d8d8"/></svg>
<svg style="position:absolute;left:725px;top:1021px;overflow:visible;" width="27" height="27" viewBox="0 0 27 27"><rect x="0" y="0" width="26" height="26" rx="2" fill="#fcd21a"/><path d="M26,14 L14,26 L14,14 Z" fill="#3a3a3a"/><path d="M26,14 L26,26 L14,26 Z" fill="#f0b400"/></svg>
<svg style="position:absolute;left:789px;top:1022px;overflow:visible;" width="23" height="23" viewBox="0 0 23 23"><g transform="translate(11.5,11.5)" fill="#f2f2f2"><rect x="-2.5" y="-11.5" width="5" height="6" transform="rotate(0)"/><rect x="-2.5" y="-11.5" width="5" height="6" transform="rotate(45)"/><rect x="-2.5" y="-11.5" width="5" height="6" transform="rotate(90)"/><rect x="-2.5" y="-11.5" width="5" height="6" transform="rotate(135)"/><rect x="-2.5" y="-11.5" width="5" height="6" transform="rotate(180)"/><rect x="-2.5" y="-11.5" width="5" height="6" transform="rotate(225)"/><rect x="-2.5" y="-11.5" width="5" height="6" transform="rotate(270)"/><rect x="-2.5" y="-11.5" width="5" height="6" transform="rotate(315)"/><circle r="8" /><circle r="4" fill="#1e1e1e"/></g></svg>
<svg style="position:absolute;left:848px;top:1019px;overflow:visible;" width="29" height="27" viewBox="0 0 29 27"><rect x="0" y="0" width="28.5" height="27" rx="3" fill="#c5160c"/><path d="M8,20 C11,14 13,9 13.5,5 C14,9 16,13 21,16 C16,15 12,17 8,20 Z" fill="none" stroke="#fff" stroke-width="1.6"/></svg>
<svg style="position:absolute;left:911px;top:1019px;overflow:visible;" width="29" height="29" viewBox="0 0 29 29"><circle cx="14.5" cy="14.5" r="13" fill="#1c9de0"/><circle cx="7" cy="7" r="6" fill="#1c9de0"/><circle cx="22" cy="22" r="6" fill="#1c9de0"/><text x="14.5" y="21" font-family="Liberation Sans" font-weight="bold" font-size="19" fill="#fff" text-anchor="middle">S</text></svg>
<svg style="position:absolute;left:973px;top:1023px;overflow:visible;" width="28" height="21" viewBox="0 0 28 21"><path d="M3,0 L28,0 L28,17 L24,21 L0,21 L0,3 Z" fill="#41b545"/><text x="13.5" y="17" font-family="Liberation Sans" font-size="16" fill="#e8ffe0" text-anchor="middle">QC</text></svg>
<div style="left:1019px;top:1010px;width:61px;height:48px;background:#474747;"></div>
<svg style="position:absolute;left:1035px;top:1022px;overflow:visible;" width="27" height="22" viewBox="0 0 27 22"><rect x="0" y="0" width="26" height="21" fill="#eeeeee" stroke="#cfcfcf" stroke-width="1"/><rect x="2" y="3" width="14" height="16" fill="#3a8a70"/><rect x="2" y="3" width="14" height="8" fill="#4a7aa0" opacity="0.6"/><rect x="20" y="3" width="3" height="8" fill="#6a9ac0"/></svg>
<div style="left:528px;top:1056px;width:51px;height:2px;background:#80b4e4;"></div>
<div style="left:590px;top:1056px;width:51px;height:2px;background:#80b4e4;"></div>
<div style="left:714px;top:1056px;width:51px;height:2px;background:#80b4e4;"></div>
<div style="left:776px;top:1056px;width:51px;height:2px;background:#80b4e4;"></div>
<div style="left:838px;top:1056px;width:51px;height:2px;background:#80b4e4;"></div>
<div style="left:900px;top:1056px;width:51px;height:2px;background:#80b4e4;"></div>
<div style="left:962px;top:1056px;width:51px;height:2px;background:#80b4e4;"></div>
<div style="left:1019px;top:1056px;width:61px;height:2px;background:#80b4e4;"></div>
<svg style="position:absolute;left:1579px;top:1030px;overflow:visible;" width="17" height="9" viewBox="0 0 17 9"><path d="M1,8 L8.5,1 L16,8" fill="none" stroke="#f0f0f0" stroke-width="1.4"/></svg>
<svg style="position:absolute;left:1608px;top:1029px;overflow:visible;" width="21" height="16" viewBox="0 0 21 16"><rect x="0.7" y="2.7" width="16" height="9" fill="none" stroke="#f0f0f0" stroke-width="1.4"/><rect x="2.5" y="4.5" width="4" height="5.5" fill="#f0f0f0"/><rect x="17" y="5.5" width="2" height="3.5" fill="#f0f0f0"/><circle cx="14.5" cy="11" r="4.5" fill="#1a8a3a"/><path d="M14.5,8 L16,11 L14.5,14 L13,11 Z" fill="#e0ffe0"/></svg>
<svg style="position:absolute;left:1640px;top:1026px;overflow:visible;" width="18" height="18" viewBox="0 0 18 18"><path d="M2,16 A14,14 0 0 1 16,2 M5,16 A11,11 0 0 1 16,5 M8,16 A8,8 0 0 1 16,8 M11,16 A5,5 0 0 1 16,11" fill="none" stroke="#e8e8e8" stroke-width="1.1"/><circle cx="15" cy="15" r="1.6" fill="#f0f0f0"/></svg>
<svg style="position:absolute;left:1666px;top:1025px;overflow:visible;" width="23" height="19" viewBox="0 0 23 19"><path d="M1,6 L5,6 L10,1.5 L10,17.5 L5,13 L1,13 Z" fill="none" stroke="#f0f0f0" stroke-width="1.3"/><path d="M13,6.5 A4,4 0 0 1 13,12.5 M16,4 A7.5,7.5 0 0 1 16,15 M19,1.5 A11,11 0 0 1 19,17.5" fill="none" stroke="#f0f0f0" stroke-width="1.2"/></svg>
<div class="t" style="left:1700px;top:1028px;font-size:13.6px;color:#f0f0f0;font-family:'Liberation Sans', sans-serif;">ENG</div>
<div class="t" style="left:1766px;top:1016px;font-size:13.8px;color:#f0f0f0;font-family:'Liberation Sans', sans-serif;">5:59</div>
<div class="t" style="left:1745px;top:1039px;font-size:14px;color:#f0f0f0;font-family:'Liberation Sans', sans-serif;">01.02.2021</div>
<svg style="position:absolute;left:1838px;top:1024px;overflow:visible;" width="28" height="32" viewBox="0 0 28 32"><path d="M0.7,0.7 L19.3,0.7 L19.3,14.3 L8,14.3 L3,18.5 L3,14.3 L0.7,14.3 Z" fill="#f4f4f4"/><path d="M4,4 L16,4 M4,7 L16,7 M4,10 L12,10" stroke="#1e1e1e" stroke-width="1.3"/><circle cx="18.5" cy="20" r="9" fill="#2e2e2e" stroke="#8a8a8a" stroke-width="1"/><text x="18.5" y="25" font-family="Liberation Sans" font-size="14" font-weight="bold" fill="#f0f0f0" text-anchor="middle">8</text></svg>
<div style="left:1883px;top:1010px;width:1px;height:48px;background:#5a5a5a;"></div>
</body></html>
